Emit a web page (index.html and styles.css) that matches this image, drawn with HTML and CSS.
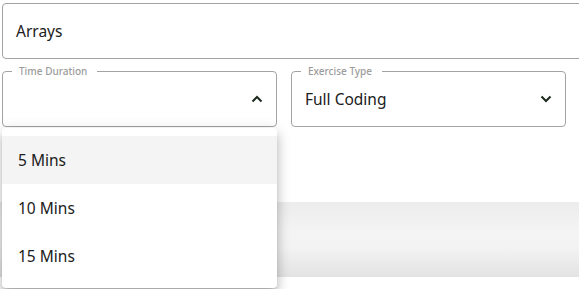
FILE: index.html
```html
<!DOCTYPE html>
<html lang="en">
<head>
  <meta charset="UTF-8" />
  <title>Exercise Settings</title>
  <link rel="stylesheet" href="styles.css">
</head>
<body>
  <div class="form">

    <!-- Topic -->
    <div class="topic">
      <div class="text-field">Arrays</div>
    </div>

    <!-- Selects -->
    <div class="select-row">
      <div class="select open">
        <span class="select-label">Time Duration</span>
        <span class="select-value"></span>
        <svg class="chevron" width="12" height="8" viewBox="0 0 12 8">
          <polyline points="1.5,6.5 6,2 10.5,6.5" />
        </svg>

        <ul class="menu">
          <li class="menu-item active">5 Mins</li>
          <li class="menu-item">10 Mins</li>
          <li class="menu-item">15 Mins</li>
        </ul>
      </div>

      <div class="select">
        <span class="select-label">Exercise Type</span>
        <span class="select-value">Full Coding</span>
        <svg class="chevron" width="12" height="8" viewBox="0 0 12 8">
          <polyline points="1.5,1.5 6,6 10.5,1.5" />
        </svg>
      </div>
    </div>

  </div>

  <div class="action-bar"></div>
</body>
</html>
```

FILE: styles.css
```css
:root {
  --border-color: #a3a3a3;
  --text-color: #202020;
  --label-color: #9b9b9b;
  --radius: 4px;
}

* {
  box-sizing: border-box;
}

body {
  margin: 0;
  padding-bottom: 12px;
  font-family: 'Noto Sans', 'Open Sans', sans-serif;
  color: var(--text-color);
  background: #fff;
}

.form {
  padding: 3px 0 0 2px;
}

/* the topic field runs on past the right edge */
.topic {
  overflow: hidden;
}

.text-field {
  width: 640px;
  height: 56px;
  border: 1px solid var(--border-color);
  border-radius: var(--radius);
  padding: 0 13px;
  display: flex;
  align-items: center;
  font-size: 15.5px;
}

.select-row {
  display: flex;
  gap: 14px;
  margin-top: 12px;
}

.select {
  position: relative;
  width: 275px;
  height: 56px;
  border: 1px solid var(--border-color);
  border-radius: var(--radius);
  padding: 0 13px;
  display: flex;
  align-items: center;
  font-size: 15.5px;
}

.select-label {
  position: absolute;
  top: -8px;
  left: 9px;
  padding: 0 10px 0 7px;
  background: #fff;
  color: var(--label-color);
  font-size: 10px;
  font-weight: 500;
  line-height: 14px;
}

.select-value {
  flex: 1;
}

.chevron {
  fill: none;
  stroke: #1d2a1e;
  stroke-width: 2;
}

.menu {
  position: absolute;
  top: 56px;
  left: -1px;
  width: 275px;
  margin: 0;
  padding: 8px 0;
  list-style: none;
  background: #fff;
  border-radius: var(--radius);
  box-shadow: 0 5px 5px -3px rgba(0, 0, 0, 0.2),
              0 8px 10px 1px rgba(0, 0, 0, 0.14),
              0 3px 14px 2px rgba(0, 0, 0, 0.12);
  z-index: 10;
}

.menu-item {
  height: 48px;
  display: flex;
  align-items: center;
  padding: 0 16px;
  font-size: 15.5px;
}

.menu-item.active {
  background: #f4f4f4;
}

.action-bar {
  margin-top: 75px;
  height: 75px;
  background: linear-gradient(#ececec, #f4f4f4 40%, #f3f3f3 60%, #e3e3e3);
}
```
